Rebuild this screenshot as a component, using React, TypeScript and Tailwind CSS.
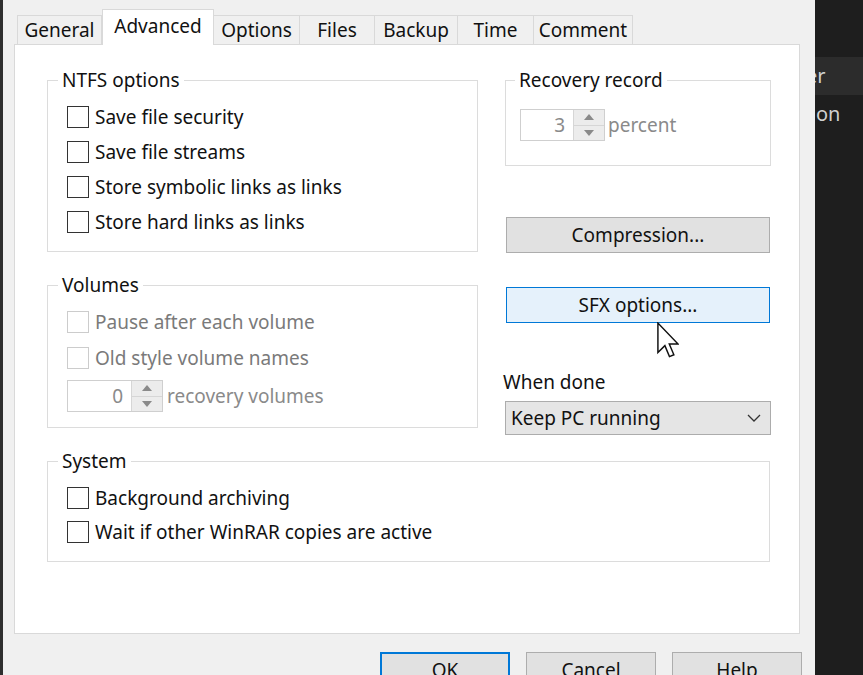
import React from "react";

function Check({ label, disabled }: { label: string; disabled?: boolean }) {
  return (
    <div className="flex items-center h-[26px]">
      <div
        className={
          disabled
            ? "w-[22px] h-[22px] border border-[#cccccc] bg-white shrink-0"
            : "w-[22px] h-[22px] border border-[#333333] bg-white shrink-0"
        }
      />
      <span className={disabled ? "ml-[6px] text-[#7a7a7a]" : "ml-[6px] text-[#111111]"}>{label}</span>
    </div>
  );
}

function Spin({ value, inputW }: { value: string; inputW: string }) {
  return (
    <div className="flex h-[32px] border border-[#cfcfcf] bg-white">
      <div className={`${inputW} flex items-center justify-end pr-[8px] text-[#8a8a8a]`}>{value}</div>
      <div className="w-[31px] flex flex-col border-l border-[#d6d6d6] bg-[#ececec]">
        <div className="flex-1 flex items-center justify-center border-b border-[#d6d6d6]">
          <svg width="10" height="6" viewBox="0 0 10 6">
            <path d="M0 6 L5 0 L10 6 Z" fill="#8a8a8a" />
          </svg>
        </div>
        <div className="flex-1 flex items-center justify-center">
          <svg width="10" height="6" viewBox="0 0 10 6">
            <path d="M0 0 L5 6 L10 0 Z" fill="#8a8a8a" />
          </svg>
        </div>
      </div>
    </div>
  );
}

function Tab({ label, w, active }: { label: string; w: string; active?: boolean }) {
  if (active) {
    return (
      <div
        className={`${w} h-[36px] -mb-[1px] relative z-10 bg-white border border-b-0 border-[#d9d9d9] flex justify-center pt-[3px] leading-[26px] text-[#111111]`}
      >
        {label}
      </div>
    );
  }
  return (
    <div
      className={`${w} h-[29px] bg-[#f0f0f0] border border-b-0 border-l-0 border-[#d9d9d9] flex items-center justify-center text-[#111111]`}
    >
      {label}
    </div>
  );
}

export default function App() {
  return (
    <div className="w-[863px] h-[675px] overflow-hidden flex bg-[#1e1e1e] font-['Noto_Sans',sans-serif] text-[19px] leading-[22px] relative">
      {/* dialog */}
      <div className="w-[815px] shrink-0 h-full bg-[#f0f0f0] border-l-[3px] border-[#2e2e2e] pl-[11px] pr-[15px] pt-[9px] flex flex-col">
        {/* tabs */}
        <div className="flex items-end pl-[3px] h-[35px]">
          <div className="w-[85px] h-[29px] bg-[#f0f0f0] border border-b-0 border-[#d9d9d9] flex items-center justify-center text-[#111111]">
            General
          </div>
          <Tab label="Advanced" w="w-[112px]" active />
          <div className="w-[86px] h-[29px] bg-[#f0f0f0] border border-b-0 border-l-0 border-[#d9d9d9] flex items-center justify-center text-[#111111]">
            Options
          </div>
          <Tab label="Files" w="w-[75px]" />
          <Tab label="Backup" w="w-[83px]" />
          <Tab label="Time" w="w-[76px]" />
          <Tab label="Comment" w="w-[99px]" />
        </div>
        {/* panel */}
        <div className="w-[786px] h-[590px] shrink-0 bg-white border border-[#d9d9d9] pt-[24px] pl-[32px]">
          <div className="flex gap-[27px]">
            {/* left column */}
            <div className="w-[431px] flex flex-col">
              <fieldset className="border border-[#dcdcdc] pl-[19px] pt-[13px] pb-[16px]">
                <legend className="ml-[-9px] px-[4px] leading-[22px] text-[#111111]">NTFS options</legend>
                <div className="flex flex-col gap-[9px]">
                  <Check label="Save file security" />
                  <Check label="Save file streams" />
                  <Check label="Store symbolic links as links" />
                  <Check label="Store hard links as links" />
                </div>
              </fieldset>
              <fieldset className="mt-[22px] border border-[#dcdcdc] pl-[19px] pt-[13px] pb-[15px]">
                <legend className="ml-[-9px] px-[4px] leading-[22px] text-[#111111]">Volumes</legend>
                <div className="flex flex-col gap-[10px]">
                  <Check label="Pause after each volume" disabled />
                  <Check label="Old style volume names" disabled />
                </div>
                <div className="mt-[9px] flex items-center">
                  <Spin value="0" inputW="w-[63px]" />
                  <span className="ml-[4px] text-[#8a8a8a]">recovery volumes</span>
                </div>
              </fieldset>
            </div>
            {/* right column */}
            <div className="w-[266px] flex flex-col">
              <fieldset className="border border-[#dcdcdc] pl-[14px] pt-[18px] pb-[24px]">
                <legend className="ml-[-5px] px-[4px] leading-[22px] text-[#111111]">Recovery record</legend>
                <div className="flex items-center">
                  <Spin value="3" inputW="w-[52px]" />
                  <span className="ml-[3px] text-[#8a8a8a]">percent</span>
                </div>
              </fieldset>
              <div className="mt-[51px] ml-[1px] w-[264px] h-[36px] bg-[#e1e1e1] border border-[#adadad] flex items-center justify-center text-[#111111]">
                Compression...
              </div>
              <div className="mt-[34px] ml-[1px] w-[264px] h-[36px] bg-[#e5f1fb] border border-[#0078d7] flex items-center justify-center text-[#111111]">
                SFX options...
              </div>
              <div className="mt-[48px] -ml-[2px] text-[#111111]">When done</div>
              <div className="mt-[8px] w-[266px] h-[34px] bg-[#e5e5e5] border border-[#acacac] flex items-center pl-[5px] pr-[9px] text-[#111111]">
                <span className="flex-1">Keep PC running</span>
                <svg width="14" height="8" viewBox="0 0 14 8">
                  <path d="M1 1 L7 7 L13 1" fill="none" stroke="#333333" strokeWidth="1.3" />
                </svg>
              </div>
            </div>
          </div>
          <fieldset className="mt-[15px] w-[723px] border border-[#dcdcdc] pl-[19px] pt-[13px] pb-[16px]">
            <legend className="ml-[-9px] px-[4px] leading-[22px] text-[#111111]">System</legend>
            <div className="flex flex-col gap-[8px]">
              <Check label="Background archiving" />
              <Check label="Wait if other WinRAR copies are active" />
            </div>
          </fieldset>
        </div>
        {/* buttons */}
        <div className="mt-[18px] flex gap-[16px] pl-[366px]">
          <div className="w-[130px] h-[36px] shrink-0 bg-[#e1e1e1] border-2 border-[#0078d7] flex items-center justify-center text-[#111111]">
            OK
          </div>
          <div className="w-[130px] h-[36px] shrink-0 bg-[#e1e1e1] border border-[#adadad] flex items-center justify-center text-[#111111]">
            Cancel
          </div>
          <div className="w-[130px] h-[36px] shrink-0 bg-[#e1e1e1] border border-[#adadad] flex items-center justify-center text-[#111111]">
            Help
          </div>
        </div>
      </div>
      {/* right dark area */}
      <div className="flex-1 h-full overflow-hidden bg-[#1e1e1e] text-[#d0d0d0] text-[20px] flex flex-col pt-[57px]">
        <div className="h-[38px] bg-[#2c2c2c] flex items-center whitespace-nowrap">
          <span className="-ml-[9px]">er</span>
        </div>
        <div className="h-[38px] flex items-center whitespace-nowrap">
          <span className="ml-[1px]">on</span>
        </div>
      </div>
      {/* mouse cursor */}
      <svg className="absolute left-[657px] top-[322px]" width="22" height="37" viewBox="0 0 12 20">
        <path
          d="M0.5 0.5 L0.5 16.5 L4.3 12.8 L6.8 18.8 L9.2 17.8 L6.7 11.9 L11.5 11.9 Z"
          fill="#ffffff"
          stroke="#111111"
          strokeWidth="0.8"
          strokeLinejoin="miter"
        />
      </svg>
    </div>
  );
}
